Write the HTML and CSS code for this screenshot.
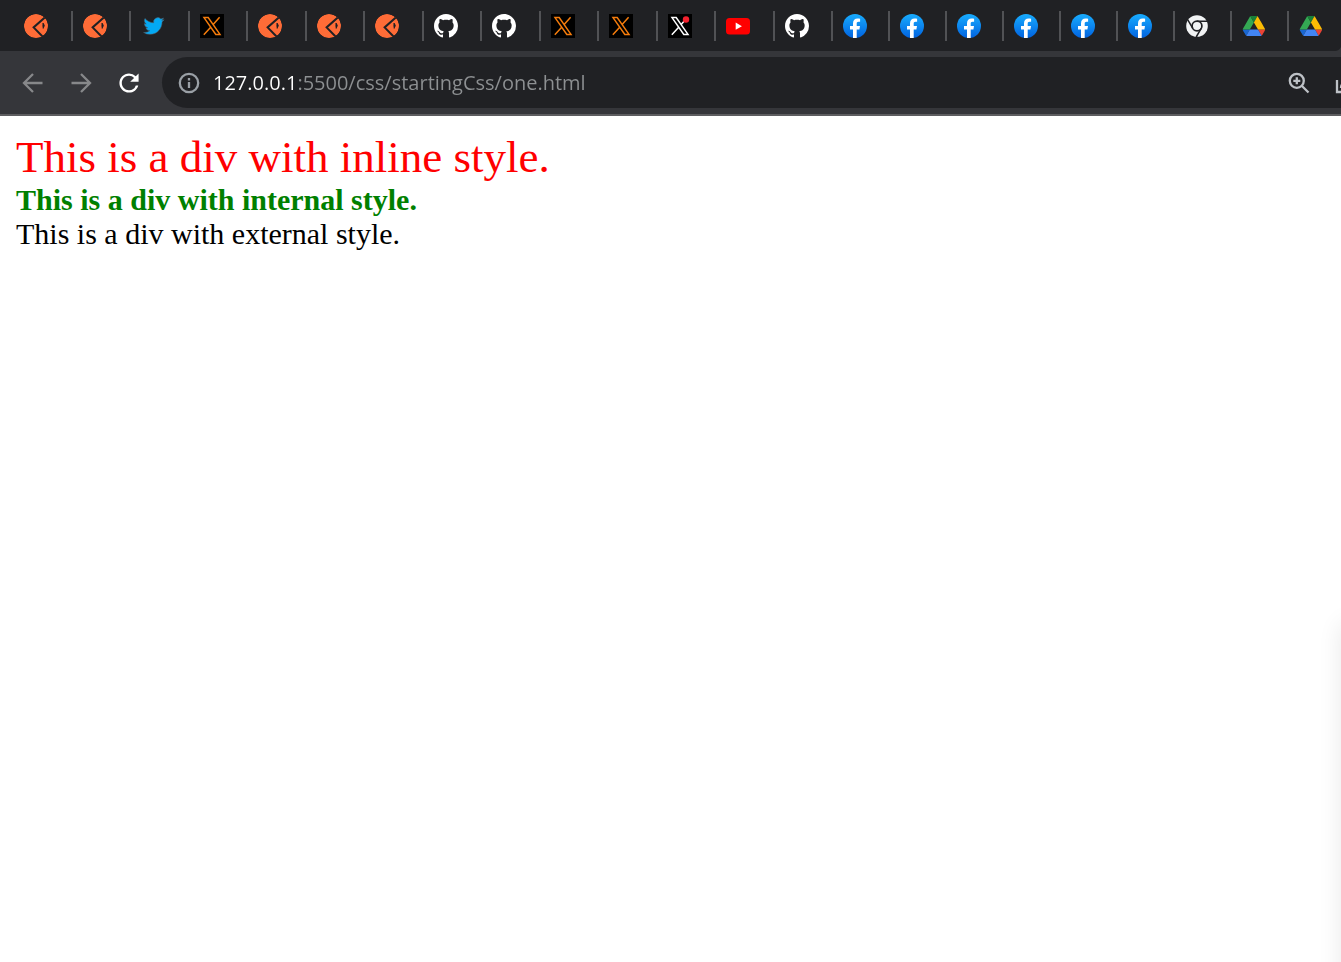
FILE: index.html
```
<!DOCTYPE html>
<html lang="en">
<head>
<meta charset="utf-8">
<title>one.html</title>
<link rel="stylesheet" href="styles.css">
</head>
<body>
<svg class="sprite" aria-hidden="true">
  <defs>
    <linearGradient id="fb-blue" x1="0" y1="0" x2="0" y2="1">
      <stop offset="0" stop-color="#18acfe"/><stop offset="1" stop-color="#0163e0"/>
    </linearGradient>
    <clipPath id="disc"><circle cx="12" cy="12" r="12"/></clipPath>
  </defs>
  <symbol id="disc-logo" viewBox="0 0 24 24">
    <g clip-path="url(#disc)">
      <circle cx="12" cy="12" r="12" fill="#ff6c37"/>
      <path d="M22.500 2 9.600 13.400 18.800 22.800" fill="none" stroke="#202124" stroke-width="2"/>
      <path d="M19 9q2.600 2.200.2 5.400-.6-2.200-.2-5.400z" fill="#202124" stroke="#202124" stroke-width=".8"/>
    </g>
  </symbol>
  <symbol id="bird" viewBox="-3 -2 28 28">
    <path fill="#03a9f4" stroke="#53616b" stroke-width=".6" d="M23.953 4.57a10 10 0 01-2.825.775 4.958 4.958 0 002.163-2.723c-.951.555-2.005.959-3.127 1.184a4.92 4.92 0 00-8.384 4.482C7.69 8.095 4.067 6.13 1.64 3.162a4.822 4.822 0 00-.666 2.475c0 1.71.87 3.213 2.188 4.096a4.904 4.904 0 01-2.228-.616v.06a4.923 4.923 0 003.946 4.827 4.996 4.996 0 01-2.212.085 4.936 4.936 0 004.604 3.417 9.867 9.867 0 01-6.102 2.105c-.39 0-.779-.023-1.17-.067a13.995 13.995 0 007.557 2.209c9.053 0 13.998-7.496 13.998-13.985 0-.21 0-.42-.015-.63A9.935 9.935 0 0024 4.59z"/>
  </symbol>
  <symbol id="x-mark" viewBox="0 0 24 24">
    <path fill="#000" d="M0 0h24v24H0z"/>
    <path d="M4 3.600h4.200L20 20.400h-4.200zM19.600 3.200l-6.700 7.500M10.700 13.200 3.800 20.800" fill="none" stroke="currentColor" stroke-width="1.500"/>
  </symbol>
  <symbol id="github" viewBox="0 0 16 16">
    <path fill="#fff" d="M8 0C3.58 0 0 3.58 0 8c0 3.54 2.29 6.53 5.47 7.59.4.07.55-.17.55-.38 0-.19-.01-.82-.01-1.49-2.01.37-2.53-.49-2.69-.94-.09-.23-.48-.94-.82-1.13-.28-.15-.68-.52-.01-.53.63-.01 1.08.58 1.23.82.72 1.21 1.87.87 2.33.66.07-.52.28-.87.51-1.07-1.78-.2-3.64-.89-3.64-3.95 0-.87.31-1.59.82-2.15-.08-.2-.36-1.02.08-2.12 0 0 .67-.21 2.2.82.64-.18 1.32-.27 2-.27.68 0 1.36.09 2 .27 1.53-1.04 2.2-.82 2.2-.82.44 1.1.16 1.92.08 2.12.51.56.82 1.27.82 2.15 0 3.07-1.87 3.75-3.65 3.95.29.25.54.73.54 1.48 0 1.07-.01 1.93-.01 2.2 0 .21.15.46.55.38A8.01 8.01 0 0 0 16 8c0-4.42-3.58-8-8-8z"/>
  </symbol>
  <symbol id="youtube" viewBox="0 0 24 24">
    <rect y="4" width="24" height="16.5" rx="3.5" fill="#f00"/>
    <path d="M9.700 8.600v7.200l6.200-3.600z" fill="#fff"/>
  </symbol>
  <symbol id="facebook" viewBox="0 0 24 24">
    <circle cx="12" cy="12" r="12" fill="url(#fb-blue)"/>
    <path fill="#fff" d="M10 24v-8.500H7V12h3V9.400C10 6.300 11.800 4.600 14.600 4.600c.9 0 1.800.1 2.500.2v3h-1.500c-1.500 0-1.900.8-1.900 1.700V12h3.300l-.6 3.500h-2.700V24z"/>
  </symbol>
  <symbol id="chrome" viewBox="0 0 24 24">
    <circle cx="12" cy="12" r="10.800" fill="#f1f3f4"/>
    <circle cx="12" cy="12" r="4.900" fill="none" stroke="#202124" stroke-width="1.700"/>
    <path d="M12 7.200h10M7.800 14.400 2.800 5.800M16.200 14.400l-5 8.600" stroke="#202124" stroke-width="1.500"/>
  </symbol>
  <symbol id="drive" viewBox="-3 -8 94 94">
    <path fill="#1967d2" d="m6.600 66.850 3.850 6.650c.8 1.400 1.950 2.500 3.300 3.300l13.750-23.800h-27.500c0 1.550.4 3.100 1.200 4.500z"/>
    <path fill="#34a853" d="m43.650 25-13.750-23.800c-1.350.8-2.500 1.900-3.300 3.300l-25.400 44a9.060 9.060 0 0 0-1.200 4.500h27.500z"/>
    <path fill="#ea4335" d="m73.550 76.800c1.350-.8 2.500-1.900 3.300-3.300l9.250-16c.8-1.400 1.200-2.950 1.200-4.500h-27.500z"/>
    <path fill="#188038" d="m43.650 25 13.750-23.800c-1.350-.8-2.900-1.200-4.500-1.200h-18.500c-1.600 0-3.150.45-4.500 1.200z"/>
    <path fill="#4285f4" d="m59.800 53h-32.300l-13.750 23.800c1.350.8 2.900 1.200 4.500 1.200h50.800c1.600 0 3.150-.45 4.500-1.200z"/>
    <path fill="#fbbc04" d="m73.400 26.500-12.700-22c-.8-1.400-1.950-2.500-3.300-3.300l-13.750 23.800 16.150 28h27.450c0-1.550-.4-3.100-1.200-4.500z"/>
  </symbol>
</svg>

<header class="browser">
  <nav class="tabs" aria-label="Open tabs">
    <button class="tab" aria-label="Tab 1"><svg class="favicon"><use href="#disc-logo"/></svg></button>
    <button class="tab" aria-label="Tab 2"><svg class="favicon"><use href="#disc-logo"/></svg></button>
    <button class="tab" aria-label="Twitter"><svg class="favicon"><use href="#bird"/></svg></button>
    <button class="tab" aria-label="X"><svg class="favicon orange"><use href="#x-mark"/></svg></button>
    <button class="tab" aria-label="Tab 5"><svg class="favicon"><use href="#disc-logo"/></svg></button>
    <button class="tab" aria-label="Tab 6"><svg class="favicon"><use href="#disc-logo"/></svg></button>
    <button class="tab" aria-label="Tab 7"><svg class="favicon"><use href="#disc-logo"/></svg></button>
    <button class="tab" aria-label="GitHub"><svg class="favicon"><use href="#github"/></svg></button>
    <button class="tab" aria-label="GitHub"><svg class="favicon"><use href="#github"/></svg></button>
    <button class="tab" aria-label="X"><svg class="favicon orange"><use href="#x-mark"/></svg></button>
    <button class="tab" aria-label="X"><svg class="favicon orange"><use href="#x-mark"/></svg></button>
    <button class="tab" aria-label="X, new notification"><svg class="favicon white" viewBox="0 0 24 24"><use href="#x-mark"/><circle cx="18" cy="5.500" r="3.200" fill="#f4212e"/></svg></button>
    <button class="tab" aria-label="YouTube"><svg class="favicon"><use href="#youtube"/></svg></button>
    <button class="tab" aria-label="GitHub"><svg class="favicon"><use href="#github"/></svg></button>
    <button class="tab narrow" aria-label="Facebook"><svg class="favicon"><use href="#facebook"/></svg></button>
    <button class="tab narrow" aria-label="Facebook"><svg class="favicon"><use href="#facebook"/></svg></button>
    <button class="tab narrow" aria-label="Facebook"><svg class="favicon"><use href="#facebook"/></svg></button>
    <button class="tab narrow" aria-label="Facebook"><svg class="favicon"><use href="#facebook"/></svg></button>
    <button class="tab narrow" aria-label="Facebook"><svg class="favicon"><use href="#facebook"/></svg></button>
    <button class="tab narrow" aria-label="Facebook"><svg class="favicon"><use href="#facebook"/></svg></button>
    <button class="tab narrow" aria-label="Chrome"><svg class="favicon"><use href="#chrome"/></svg></button>
    <button class="tab narrow" aria-label="Google Drive"><svg class="favicon"><use href="#drive"/></svg></button>
    <button class="tab narrow" aria-label="Google Drive"><svg class="favicon"><use href="#drive"/></svg></button>
    <svg class="tab-foot" viewBox="0 0 6 6" aria-hidden="true"><path d="M0 6Q4 6 6 2V6z" fill="#35363a"/></svg>
  </nav>
  <div class="toolbar">
    <button class="tool dim" aria-label="Back"><svg viewBox="0 0 24 24"><path d="M21.500 12H3M12 3l-9 9 9 9"/></svg></button>
    <button class="tool dim" aria-label="Forward"><svg viewBox="0 0 24 24"><path d="M2.500 12h18.500M12 3l9 9-9 9"/></svg></button>
    <button class="tool reload" aria-label="Reload"><svg viewBox="2 2 20 20"><path d="M17.650 6.350A7.958 7.958 0 0012 4c-4.420 0-7.990 3.580-7.990 8s3.570 8 7.990 8c3.730 0 6.840-2.550 7.730-6h-2.080A5.990 5.990 0 0112 18c-3.310 0-6-2.690-6-6s2.690-6 6-6c1.660 0 3.140.69 4.220 1.780L13 11h7V4l-2.350 2.350z"/></svg></button>
    <div class="omnibox">
      <button class="tool info" aria-label="Site information"><svg viewBox="0 0 24 24"><circle cx="12" cy="12" r="9.200"/><path d="M12 11V17M12 7V9.400"/></svg></button>
      <input class="address" type="text" aria-label="Address" value="127.0.0.1:5500/css/startingCss/one.html" spellcheck="false">
      <button class="tool zoom" aria-label="Zoom"><svg viewBox="0 0 24 24"><circle cx="9.800" cy="9.800" r="7"/><path d="M9.800 6.300v7M6.300 9.800h7M15 15l6.500 6.500"/></svg></button>
      <button class="tool share" aria-label="Share"><svg viewBox="0 0 24 24"><path d="M2 9v12h18V9M6 17q0-6 8-7"/></svg></button>
    </div>
  </div>
</header>

<main class="page">
  <div class="line large">This is a div with inline style.</div>
  <div class="line strong">This is a div with internal style.</div>
  <div class="line">This is a div with external style.</div>
</main>
</body>
</html>
```

FILE: styles.css
```
* { box-sizing: border-box; }

body {
  margin: 0;
  min-height: 100vh;
  display: flex;
  flex-direction: column;
  overflow: hidden;
  background: #fff;
}

button {
  border: 0;
  padding: 0;
  background: none;
}

svg { display: block; }

.sprite {
  position: absolute;
  width: 0;
  height: 0;
}

/* Tab strip */
.tabs {
  position: relative;
  display: flex;
  align-items: center;
  height: 51px;
  padding-left: 14px;
  overflow: hidden;
  background: #202124;
}

.tab {
  flex: none;
  display: flex;
  align-items: center;
  width: 59px;
  height: 30px;
  padding-left: 10px;
  border-right: 2px solid #515255;
}

.tab:nth-child(even) { width: 58px; }
.tab.narrow { width: 57px; }

.favicon {
  width: 24px;
  height: 24px;
}

.orange { color: #f57c0c; }
.white { color: #fff; }

.tab-foot {
  position: absolute;
  right: 0;
  bottom: 0;
  width: 6px;
  height: 6px;
}

/* Toolbar */
.toolbar {
  display: flex;
  align-items: center;
  height: 65px;
  padding-left: 21px;
  gap: 24px;
  overflow: hidden;
  background: #35363a;
  border-bottom: 2px solid #5d5d60;
}

.tool {
  flex: none;
  width: 24px;
  height: 24px;
}

.tool svg {
  width: 100%;
  height: 100%;
  fill: none;
  stroke: currentColor;
  stroke-width: 2.3;
}

.tool.dim { color: #87888a; }
.tool.reload { color: #fff; }
.tool.reload svg {
  fill: currentColor;
  stroke: none;
}

.omnibox {
  flex: 1;
  min-width: 0;
  display: flex;
  align-items: center;
  height: 51px;
  margin-left: -3px;
  padding-left: 15px;
  border-radius: 26px 0 0 26px;
  background: #202124;
}

.info { color: #9aa0a6; }

.address {
  flex: 1;
  min-width: 0;
  height: 36px;
  margin-left: 12px;
  padding: 0;
  border: 0;
  outline: 0;
  font: 20px "Open Sans", "Noto Sans", sans-serif;
  color: transparent;
  background: linear-gradient(to right, #fff 85px, #8d9092 85px);
  -webkit-background-clip: text;
  background-clip: text;
}

.zoom, .share { color: #bdc1c6; }
.share {
  margin-left: 24px;
  margin-right: -18px;
}

/* Document */
.page {
  position: relative;
  flex: 1;
  padding: 15px 16px;
  overflow: hidden;
  font: 30px "Liberation Serif", "Times New Roman", serif;
  color: #000;
}

.page::after {
  content: "";
  position: absolute;
  top: 60%;
  bottom: -40px;
  left: 100%;
  width: 40px;
  box-shadow: 0 0 24px rgba(0, 0, 0, 0.09);
}

.large {
  font-size: 45px;
  color: red;
}

.strong {
  font-weight: bold;
  color: green;
}
```
